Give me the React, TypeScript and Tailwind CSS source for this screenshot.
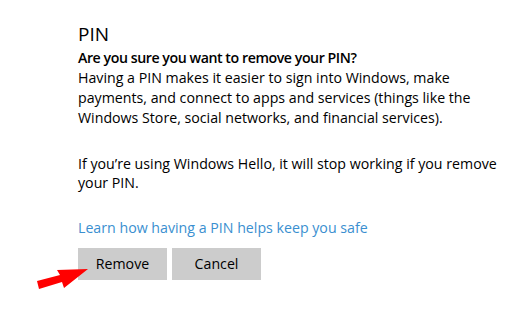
import React from "react";

export default function App() {
  return (
    <div
      className="relative w-[526px] h-[314px] bg-white text-black overflow-hidden"
      style={{ fontFamily: '"Open Sans", "Noto Sans", sans-serif' }}
    >
      <div className="flex flex-col pl-[78px] pt-[21px]">
        <div className="text-[19px] leading-[26px]">PIN</div>
        <div className="text-[14.2px] leading-[20px] font-semibold tracking-[-0.45px] mt-[1px]">
          Are you sure you want to remove your PIN?
        </div>
        <div className="text-[14.2px] leading-[20px] w-[432px]">
          Having a PIN makes it easier to sign into Windows, make payments, and connect to apps and services (things like the Windows Store, social networks, and financial services).
        </div>
        <div className="text-[14.2px] leading-[19px] mt-[26px] w-[432px]">
          If you’re using Windows Hello, it will stop working if you remove your PIN.
        </div>
        <div className="text-[14.2px] leading-[20px] mt-[26px] text-[#3a8fd0]">
          Learn how having a PIN helps keep you safe
        </div>
        <div className="flex gap-[5px] mt-[10px]">
          <button className="w-[89px] h-[32px] bg-[#cccccc] text-[14.2px]">Remove</button>
          <button className="w-[89px] h-[32px] bg-[#cccccc] text-[14.2px]">Cancel</button>
        </div>
      </div>
      <svg className="absolute left-0 top-0" width="526" height="314">
        <polygon points="37,281 60,275 57,270 88,269 64,288 62,282 39,289" fill="#ff0000" />
      </svg>
    </div>
  );
}
